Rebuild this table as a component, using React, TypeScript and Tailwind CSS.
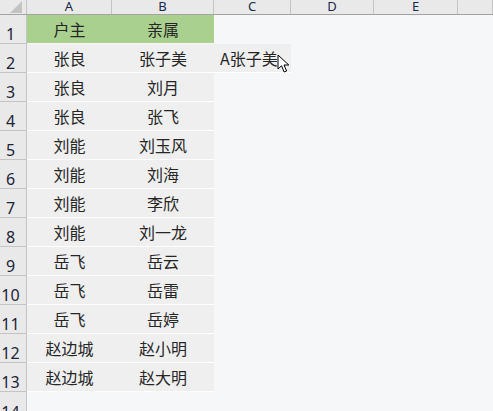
import React from "react";

const rows: [string, string][] = [
  ["户主", "亲属"],
  ["张良", "张子美"],
  ["张良", "刘月"],
  ["张良", "张飞"],
  ["刘能", "刘玉风"],
  ["刘能", "刘海"],
  ["刘能", "李欣"],
  ["刘能", "刘一龙"],
  ["岳飞", "岳云"],
  ["岳飞", "岳雷"],
  ["岳飞", "岳婷"],
  ["赵边城", "赵小明"],
  ["赵边城", "赵大明"],
];

const cols = ["A", "B", "C", "D", "E", ""];
const grid = "grid grid-cols-[27px_85px_102px_77px_83px_84px_1fr]";
const cjk = { fontFamily: '"Noto Sans CJK SC", "Noto Sans", sans-serif' } as const;

function Cursor() {
  return (
    <svg className="absolute left-[63px] top-[10px]" width="14" height="20" viewBox="0 0 14 20">
      <path
        d="M1 1 L1 15 L4.5 11.8 L7.2 18 L9.6 17 L7 11 L11.8 11 Z"
        fill="#ffffff"
        stroke="#000000"
        strokeWidth="1"
        strokeLinejoin="miter"
      />
    </svg>
  );
}

export default function App() {
  return (
    <div className="w-[493px] h-[411px] overflow-hidden bg-[#f6f7f9]" style={{ fontFamily: '"Noto Sans", sans-serif' }}>
      <div className={`${grid} h-[15px] bg-[#e9e9e9] border-b border-[#a3a3a3]`}>
        <div className="relative border-r border-[#c4c4c4] h-[14px]">
          <div className="absolute left-[10px] top-[1px] w-0 h-0 border-l-[12px] border-l-transparent border-b-[12px] border-b-[#c3c3c3]" />
        </div>
        {cols.map((c, i) => (
          <div
            key={i}
            className="h-[14px] border-r border-[#c4c4c4] flex items-start justify-center text-[13px] leading-[13px] text-[#1a2a4a]"
          >
            <span>{c}</span>
          </div>
        ))}
      </div>
      {rows.map((r, idx) => {
        const n = idx + 1;
        const green = n === 1;
        return (
          <div key={n} className={`${grid} h-[29px]`}>
            <div className="bg-[#e9e9e9] border-r border-b border-[#c4c4c4] flex items-end justify-center pr-[5px] text-[16px] leading-none text-[#1c2438]">
              <span className="mb-[1px]">{n}</span>
            </div>
            <div
              className={`flex items-center justify-center text-[16px] text-[#262626] border-b ${green ? "bg-[#a9d08e] border-[#f6f7f9]" : "bg-[#efefef] border-white"}`}
              style={cjk}
            >
              {r[0]}
            </div>
            <div
              className={`flex items-center justify-center text-[16px] text-[#262626] border-b ${green ? "bg-[#a9d08e] border-[#f6f7f9]" : "bg-[#efefef] border-white"}`}
              style={cjk}
            >
              {r[1]}
            </div>
            {n === 2 ? (
              <div className="relative bg-[#efefef] border-b border-white flex items-center pl-[6px] text-[16px] text-[#262626]" style={cjk}>
                A张子美
                <Cursor />
              </div>
            ) : (
              <div />
            )}
            <div />
            <div />
            <div />
          </div>
        );
      })}
      <div className={`${grid} h-[29px]`}>
        <div className="bg-[#e9e9e9] border-r border-[#c4c4c4] flex items-end justify-center pr-[5px] text-[16px] leading-none text-[#1c2438]">
          <span className="mb-[1px]">14</span>
        </div>
      </div>
    </div>
  );
}
